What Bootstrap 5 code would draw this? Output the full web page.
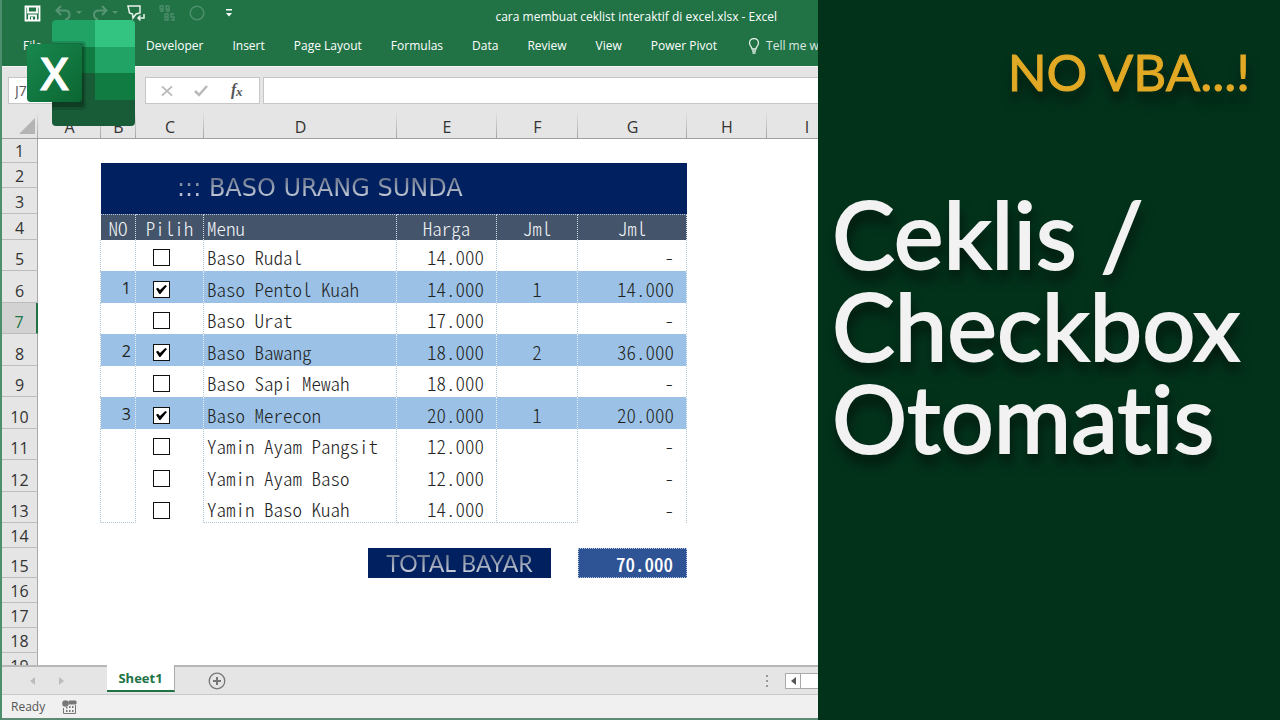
<!DOCTYPE html>
<html lang="id">
<head>
<meta charset="utf-8">
<meta name="viewport" content="width=device-width, initial-scale=1">
<title>Ceklis / Checkbox Otomatis</title>
<link href="https://cdn.jsdelivr.net/npm/bootstrap@5.3.0/dist/css/bootstrap.min.css" rel="stylesheet">
<style>
  body { font-family: "Open Sans", sans-serif; background: #03321b; }
  .stage { display: grid; grid-template-columns: 409fr 231fr; }
  .excel { border-left: 2px solid #4d8f6c; border-bottom: 2px solid #5d8a72; background: #e5e5e5; font-size: 12px; line-height: 16px; }
  .topbar { background: #217346; color: #fff; height: 66px; }
  .quick { height: 26px; padding-left: 22px; }
  .quick button, .fx button, .tabs-row button { border: 0; background: none; padding: 0; line-height: 0; color: inherit; }
  .quick button { margin-right: 14px; }
  .quick .tight { margin-right: 8px; }
  .quick .loose { margin-right: 20px; }
  .title-text { margin-right: 41px; font-size: 12px; padding-top: 8px; }
  .ribbon { height: 40px; padding-left: 21px; gap: 29px; }
  .ribbon a { color: #fff; text-decoration: none; }
  .ribbon .file-tab { width: 94px; }
  .ribbon .tell-me { color: #dbe9e1; gap: 6px; margin-left: 2px; }
  .fx { height: 45px; padding: 10px 0 7px 6px; border-top: 1px solid #f5f5f5; }
  .fx input, .fx-tools { border: 1px solid #c6c6c6; background: #fff; border-radius: 0; height: 27px; }
  .fx .name-box { width: 126px; padding: 0 6px; color: #555; font-size: 14px; }
  .fx-tools { width: 115px; margin-left: 11px; margin-right: 3px; }
  .sheet { background: #fff; min-height: 0; }
  .cells { table-layout: fixed; width: 845px; border-collapse: separate; border-spacing: 0; color: #222; font: 19px/20px "Noto Sans CJK JP", sans-serif; font-feature-settings: "hwid"; font-weight: 300; }
  .cells th, .cells td { padding: 0; overflow: hidden; white-space: nowrap; vertical-align: bottom; }
  .cells thead th { height: 28px; background: linear-gradient(#e5e5e5, #a5a5a5) right / 1px 100% no-repeat #e5e5e5; border-bottom: 1px solid #a0a0a0; }
  .cells thead th, .cells tbody th { font: 16px/22px "Open Sans", sans-serif; text-align: center; color: #333; }
  .cells tbody th { background: #e5e5e5; border-right: 1px solid #a8a8a8; border-bottom: 1px solid #bcbcbc; }
  .cells tbody th.current { background: #d2d2d2; color: #217346; border-right: 2px solid #217346; }
  .h24 { height: 24px; } .h25 { height: 25px; } .h26 { height: 26px; } .h31 { height: 31px; } .h32 { height: 32px; } .h30 { height: 30px; }
  .corner svg { display: block; margin-left: auto; margin-right: 3px; margin-bottom: 4px; }
  .item td { padding-bottom: 4px; border-right: 1px dotted #b4c7d6; }
  .item td.no { font: 16px/20px "Open Sans", sans-serif; text-align: right; padding: 0 4px 5px 0; }
  .item td.menu, .labels td.menu { padding-left: 3px; }
  .item td.num { text-align: right; padding-right: 12px; }
  .item td.qty { text-align: center; }
  .item.on td:not(.edge) { background: #9bc2e6; border-right-color: #e6f0f8; }
  .item.last td.no, .item.last td.menu, .item.last td.price, .item.last td.qty { border-bottom: 1px dotted #b4c7d6; }
  .item.last td { padding-bottom: 3px; }
  .labels td:not(.edge) { background: #44546a; color: #f2f5f8; text-align: center; border-right: 1px dotted #d5dde6; border-top: 1px dotted #b4c7e0; vertical-align: middle; }
  .labels td.menu:not(.edge) { text-align: left; }
  .banner { background: #002060; }
  .cells td.banner { vertical-align: middle; padding-left: 76px; padding-bottom: 2px; }
  .shade { font: 24px/30px "DejaVu Sans", sans-serif; color: transparent; background: linear-gradient(#6f7a90 20%, #c3cad6 80%); -webkit-background-clip: text; background-clip: text; }
  .total-label { width: 183px; height: 30px; margin: 0 27px 0 auto; text-align: center; }
  .total-label .shade { font-family: Lato, sans-serif; font-size: 23px; }
  .cells td.total { background: #2f5496; color: #fff; font-weight: 500; text-align: right; padding: 0 13px 3px 0; border: 1px dotted #b4c7e0; }
  .tick { appearance: none; display: block; width: 17px; height: 17px; margin: 0 0 1px 17px; border: 1px solid #111; background: #fff; }
  .tick:checked::before { content: ""; display: block; width: 11px; height: 9px; margin: 3px 2px; background: #000; clip-path: polygon(0 42%, 18% 30%, 36% 55%, 84% 0, 100% 10%, 40% 100%, 30% 100%); }
  .tabs-row { height: 30px; border-top: 2px solid #b8b8b8; border-bottom: 1px solid #c8c8c8; color: #777; }
  .tabs-row .arrows { width: 105px; padding-left: 28px; gap: 24px; color: #bdbdbd; }
  .tabs-row .sheet-tab { width: 68px; height: 27px; margin-top: -2px; background: #fff; border-bottom: 2px solid #217346; border-right: 1px solid #aaa; color: #217346; font: bold 13px/26px "Open Sans", sans-serif; }
  .tabs-row .add-sheet { margin-left: 33px; }
  .tabs-row .scroller { width: 33px; height: 16px; border: 1px solid #aaa; border-right: 0; background: #fff; }
  .scroller button { width: 15px; border-right: 1px solid #aaa; }
  .status { height: 23px; background: #f0f0f0; color: #555; padding-left: 9px; gap: 17px; }
  .logo { top: 16px; left: 23px; }
  .promo { background: #03321b; padding: 36px 30px 0 14px; font-family: Lato, sans-serif; font-variant-ligatures: none; }
  .promo p, .promo h1 { text-shadow: 2px 10px 12px rgba(0, 0, 0, .6); margin: 0; }
  .promo p { color: #e2a925; font-size: 51px; line-height: 72px; text-align: right; font-weight: 400; -webkit-text-stroke: 1px #e2a925; white-space: nowrap; }
  .promo h1 { color: #f2f2f2; font-size: 94px; line-height: 92px; font-weight: 400; margin-top: 79px; -webkit-text-stroke: 2px #f2f2f2; white-space: nowrap; }
</style>
</head>
<body>
<div class="stage vh-100 overflow-hidden">
  <main class="excel position-relative d-flex flex-column overflow-hidden vh-100">
    <header class="topbar flex-shrink-0">
      <div class="quick d-flex align-items-center">
        <button aria-label="Save"><svg width="17" height="17" viewBox="0 0 17 17" fill="none" stroke="#fff" stroke-width="1.8"><path d="M1.5 1.5h14v14h-14zM4 2v5.500h9V2M5 15v-4.500h7V15M8 12v3"/></svg></button>
        <button aria-label="Undo" class="tight"><svg width="28" height="16" viewBox="0 0 28 16" fill="none" stroke="#569574" stroke-width="2"><path d="M6 1 1.500 5.500 6 10M2 5.500h8c6 0 6 8 0 9"/><path d="M21 6h6l-3 3z" fill="#569574" stroke="none"/></svg></button>
        <button aria-label="Redo" class="tight"><svg width="28" height="16" viewBox="0 0 28 16" fill="none" stroke="#569574" stroke-width="2"><path d="M11 1l4.500 4.500L11 10M15 5.500H8c-6 0-7 7-1 9"/><path d="M21 6h6l-3 3z" fill="#569574" stroke="none"/></svg></button>
        <button aria-label="Comments"><svg width="18" height="17" viewBox="0 0 18 17" fill="none" stroke="#e8f2ec" stroke-width="1.500"><path d="M1 1h12v7l-4 1-3 4-.5-4L2.500 8zM17 9v4h-6M13.500 10.500 11 13l2.500 2.500"/></svg></button>
        <button aria-label="Decimals"><svg width="16" height="17" viewBox="0 0 16 17" fill="none" stroke="#4d8f6b" stroke-width="1.300"><path d="M4 4H1V1h3v5H1M10 4H7V1h3v5H7M6 9v6h3V9zM6 12h3M15 9h-3v3h3v3h-3"/></svg></button>
        <button aria-label="Shape" class="loose"><svg width="16" height="16" viewBox="0 0 16 16" fill="none" stroke="#4d8f6b" stroke-width="1.500"><circle cx="8" cy="8" r="6.800"/></svg></button>
        <button aria-label="Customize"><svg width="8" height="8" viewBox="0 0 8 8" fill="#fff"><path d="M1 0h6v1.500H1zM1 4h6L4 7.500z"/></svg></button>
        <span class="title-text ms-auto">cara membuat ceklist interaktif di excel.xlsx - Excel</span>
      </div>
      <nav class="ribbon d-flex align-items-center text-nowrap" aria-label="Ribbon">
        <a href="#" class="file-tab flex-shrink-0">File</a><a href="#">Developer</a><a href="#">Insert</a><a href="#">Page Layout</a><a href="#">Formulas</a><a href="#">Data</a><a href="#">Review</a><a href="#">View</a><a href="#">Power Pivot</a>
        <a href="#" class="tell-me d-flex align-items-center"><svg width="12" height="16" viewBox="0 0 12 16" fill="none" stroke="#e3efe8" stroke-width="1.300"><path d="M4 11C4 8.500 1.500 8 1.500 5a4.500 4.500 0 0 1 9 0c0 3-2.500 3.500-2.500 6zM4 13h4M4.500 15h3"/></svg>Tell me w</a>
      </nav>
    </header>
    <div class="fx d-flex flex-shrink-0">
      <input class="name-box" aria-label="Name Box" value="J7">
      <div class="fx-tools d-flex align-items-center justify-content-around flex-shrink-0 px-1">
        <button aria-label="Cancel"><svg width="12" height="12" viewBox="0 0 13 12" stroke="#b9b9b9" stroke-width="2"><path d="M1 1l11 10M12 1 1 11"/></svg></button>
        <button aria-label="Enter"><svg width="14" height="12" viewBox="0 0 14 12" fill="none" stroke="#b9b9b9" stroke-width="2.500"><path d="M1 6l4 4 8-9"/></svg></button>
        <button aria-label="Insert Function"><svg width="16" height="18" viewBox="0 0 16 18"><text x="2" y="13" font-family="Liberation Serif" font-size="16" font-style="italic" font-weight="bold" fill="#555">f</text><text x="7" y="14" font-family="Liberation Serif" font-size="13" font-style="italic" font-weight="bold" fill="#555">x</text></svg></button>
      </div>
      <input class="flex-grow-1 border-end-0" aria-label="Formula">
    </div>
    <section class="sheet flex-grow-1 overflow-hidden">
      <table class="cells">
        <colgroup><col style="width:36px"><col style="width:63px"><col style="width:35px"><col style="width:68px"><col style="width:193px"><col style="width:100px"><col style="width:81px"><col style="width:109px"><col style="width:80px"><col style="width:80px"></colgroup>
        <thead><tr><th class="corner"><svg width="16" height="16" viewBox="0 0 16 16"><path d="M16 0v16H0z" fill="#b4b4b4"/></svg></th><th>A</th><th>B</th><th>C</th><th>D</th><th>E</th><th>F</th><th>G</th><th>H</th><th>I</th></tr></thead>
        <tbody>
          <tr class="h24"><th>1</th><td colspan="9"></td></tr>
          <tr class="h25"><th>2</th><td></td><td class="banner" colspan="6" rowspan="2"><span class="shade">::: BASO URANG SUNDA</span></td><td colspan="2"></td></tr>
          <tr class="h26"><th>3</th><td></td><td colspan="2"></td></tr>
          <tr class="h26 labels"><th>4</th><td class="edge"></td><td>NO</td><td>Pilih</td><td class="menu">Menu</td><td>Harga</td><td>Jml</td><td>Jml</td><td class="edge" colspan="2"></td></tr>
          <tr class="h31 item"><th>5</th><td class="edge"></td><td class="no"></td><td><input type="checkbox" class="tick" aria-label="Baso Rudal"></td><td class="menu">Baso Rudal</td><td class="num price">14.000</td><td class="qty"></td><td class="num">-</td><td class="edge border-0" colspan="2"></td></tr>
          <tr class="h32 item on"><th>6</th><td class="edge"></td><td class="no">1</td><td><input type="checkbox" class="tick" aria-label="Baso Pentol Kuah" checked></td><td class="menu">Baso Pentol Kuah</td><td class="num price">14.000</td><td class="qty">1</td><td class="num">14.000</td><td class="edge border-0" colspan="2"></td></tr>
          <tr class="h31 item"><th class="current">7</th><td class="edge"></td><td class="no"></td><td><input type="checkbox" class="tick" aria-label="Baso Urat"></td><td class="menu">Baso Urat</td><td class="num price">17.000</td><td class="qty"></td><td class="num">-</td><td class="edge border-0" colspan="2"></td></tr>
          <tr class="h32 item on"><th>8</th><td class="edge"></td><td class="no">2</td><td><input type="checkbox" class="tick" aria-label="Baso Bawang" checked></td><td class="menu">Baso Bawang</td><td class="num price">18.000</td><td class="qty">2</td><td class="num">36.000</td><td class="edge border-0" colspan="2"></td></tr>
          <tr class="h31 item"><th>9</th><td class="edge"></td><td class="no"></td><td><input type="checkbox" class="tick" aria-label="Baso Sapi Mewah"></td><td class="menu">Baso Sapi Mewah</td><td class="num price">18.000</td><td class="qty"></td><td class="num">-</td><td class="edge border-0" colspan="2"></td></tr>
          <tr class="h32 item on"><th>10</th><td class="edge"></td><td class="no">3</td><td><input type="checkbox" class="tick" aria-label="Baso Merecon" checked></td><td class="menu">Baso Merecon</td><td class="num price">20.000</td><td class="qty">1</td><td class="num">20.000</td><td class="edge border-0" colspan="2"></td></tr>
          <tr class="h31 item"><th>11</th><td class="edge"></td><td class="no"></td><td><input type="checkbox" class="tick" aria-label="Yamin Ayam Pangsit"></td><td class="menu">Yamin Ayam Pangsit</td><td class="num price">12.000</td><td class="qty"></td><td class="num">-</td><td class="edge border-0" colspan="2"></td></tr>
          <tr class="h32 item"><th>12</th><td class="edge"></td><td class="no"></td><td><input type="checkbox" class="tick" aria-label="Yamin Ayam Baso"></td><td class="menu">Yamin Ayam Baso</td><td class="num price">12.000</td><td class="qty"></td><td class="num">-</td><td class="edge border-0" colspan="2"></td></tr>
          <tr class="h31 item last"><th>13</th><td class="edge"></td><td class="no"></td><td><input type="checkbox" class="tick" aria-label="Yamin Baso Kuah"></td><td class="menu">Yamin Baso Kuah</td><td class="num price">14.000</td><td class="qty"></td><td class="num">-</td><td class="edge border-0" colspan="2"></td></tr>
          <tr class="h25"><th>14</th><td colspan="9"></td></tr>
          <tr class="h30"><th>15</th><td colspan="3"></td><td colspan="3"><div class="total-label banner"><span class="shade">TOTAL BAYAR</span></div></td><td class="total">70.000</td><td colspan="2"></td></tr>
          <tr class="h25"><th>16</th><td colspan="9"></td></tr>
          <tr class="h25"><th>17</th><td colspan="9"></td></tr>
          <tr class="h25"><th>18</th><td colspan="9"></td></tr>
          <tr class="h25"><th>19</th><td colspan="9"></td></tr>
        </tbody>
      </table>
    </section>
    <div class="tabs-row d-flex align-items-center flex-shrink-0">
      <div class="arrows d-flex">
        <button aria-label="Previous sheet"><svg width="5" height="8" fill="currentColor"><path d="M5 0v8L0 4z"/></svg></button>
        <button aria-label="Next sheet"><svg width="5" height="8" fill="currentColor"><path d="M0 0v8l5-4z"/></svg></button>
      </div>
      <button class="sheet-tab align-self-start">Sheet1</button>
      <button aria-label="New sheet" class="add-sheet"><svg width="18" height="18" viewBox="0 0 18 18" fill="none" stroke="#777" stroke-width="1.300"><circle cx="9" cy="9" r="7.800"/><path d="M9 5v8M5 9h8" stroke-width="2"/></svg></button>
      <svg class="ms-auto me-3" width="3" height="12" fill="#999"><path d="M0 0h2v2H0zM0 5h2v2H0zM0 10h2v2H0z"/></svg>
      <div class="scroller d-flex"><button aria-label="Scroll left"><svg width="5" height="8" fill="#555"><path d="M5 0v8L0 4z"/></svg></button></div>
    </div>
    <footer class="status d-flex align-items-center flex-shrink-0">
      <span>Ready</span>
      <svg width="15" height="14" viewBox="0 0 15 14" fill="#777"><circle cx="3.500" cy="3.500" r="3.300"/><path d="M7 1h7v3H7zM1.500 8v5.500h12V5" fill="none" stroke="#777"/><path d="M7 1h7v3H7zM4 7h1.500v1.500H4zM7 6h1.500v2H7zM10 6h1.500v2H10zM4 10h1.500v2H4zM7 10h1.500v2H7zM10 10h1.500v2H10z"/></svg>
    </footer>
    <svg class="logo position-absolute" width="112" height="112" viewBox="25 16 112 112" role="img" aria-label="Excel">
      <defs>
        <clipPath id="book"><rect x="52" y="20" width="83" height="106" rx="4"/></clipPath>
        <linearGradient id="tile" x1="0" y1="0" x2="1" y2="1"><stop offset="0" stop-color="#18884f"/><stop offset="1" stop-color="#0b6631"/></linearGradient>
      </defs>
      <g clip-path="url(#book)">
        <path d="M52 20h83v106H52z" fill="#185c37"/><path d="M52 20h43v27H52z" fill="#21a366"/><path d="M95 20h40v27H95z" fill="#33c481"/>
        <path d="M52 47h43v26H52z" fill="#107c41"/><path d="M95 47h40v26H95z" fill="#21a366"/><path d="M95 73h40v27H95z" fill="#107c41"/>
        <path d="M52 41h30a4 4 0 0 1 4 4v61a4 4 0 0 1-4 4H52z" fill="#000" opacity=".14"/><path d="M52 43h29a3 3 0 0 1 3 3v58a3 3 0 0 1-3 3H52z" fill="#000" opacity=".22"/>
      </g>
      <rect x="27" y="44" width="55" height="58" rx="4" fill="url(#tile)"/>
      <text x="54.500" y="90" text-anchor="middle" font-family="Open Sans" font-weight="600" font-size="45" fill="#fff" stroke="#fff">X</text>
    </svg>
  </main>
  <aside class="promo overflow-hidden">
    <p>NO VBA...!</p>
    <h1>Ceklis /<br>Checkbox<br>Otomatis</h1>
  </aside>
</div>
<script src="https://cdn.jsdelivr.net/npm/bootstrap@5.3.0/dist/js/bootstrap.bundle.min.js"></script>
</body>
</html>
